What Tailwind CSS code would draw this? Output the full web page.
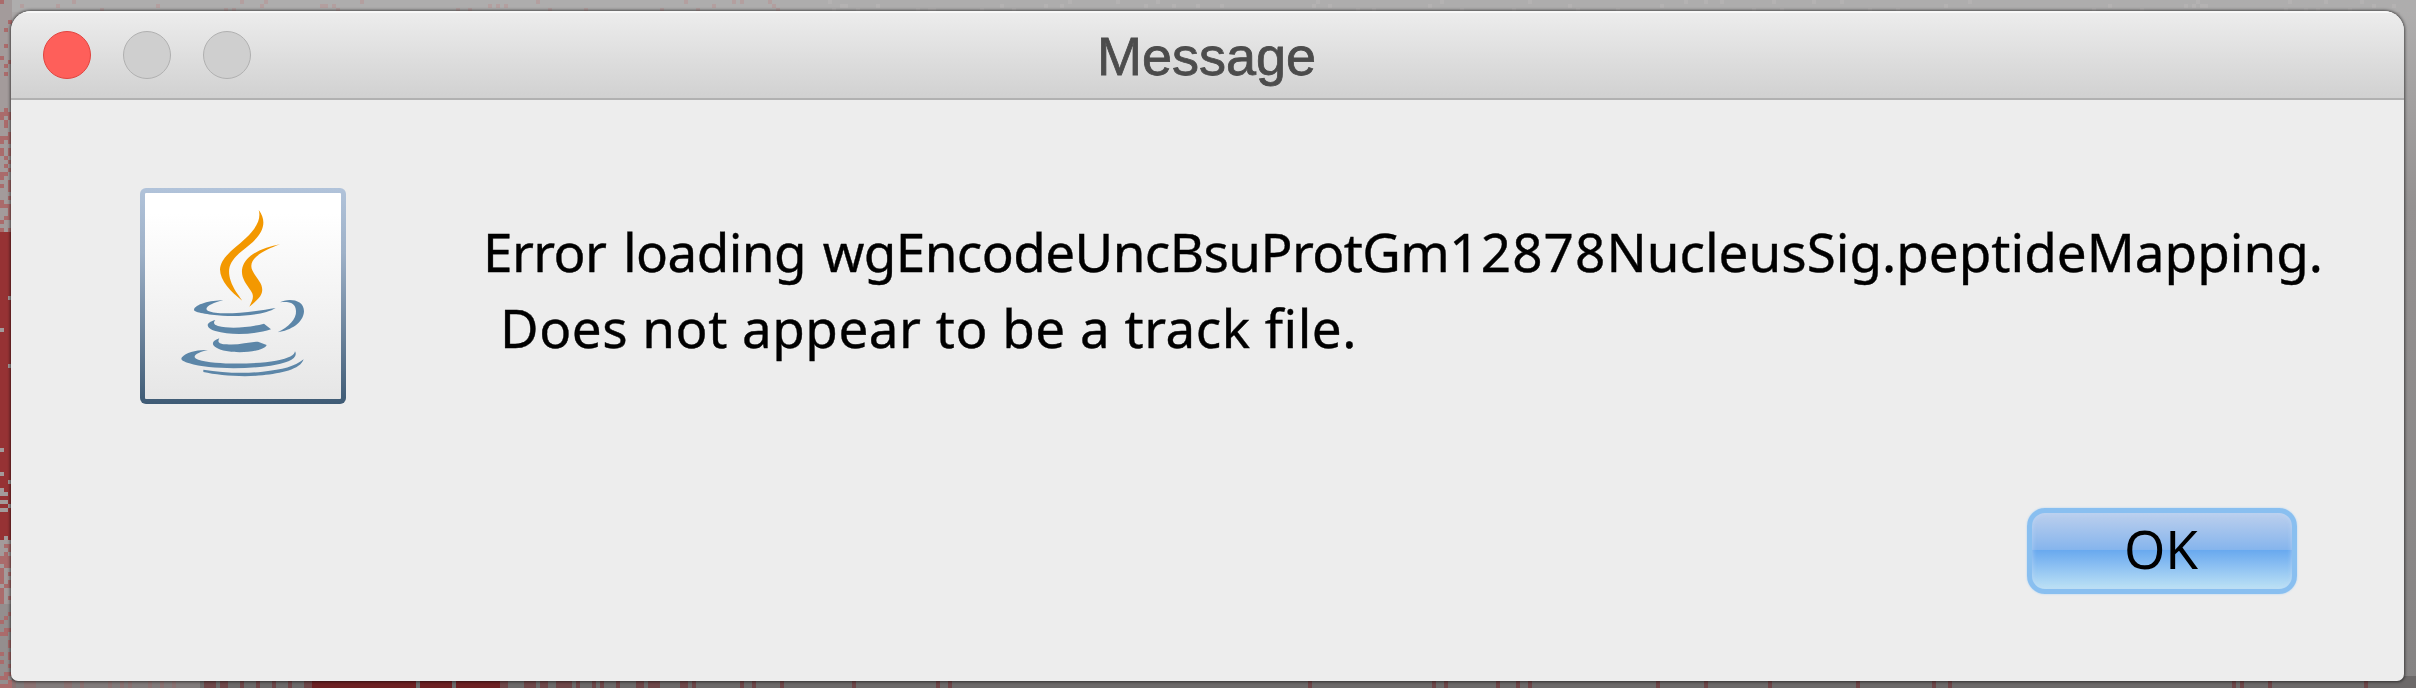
<!DOCTYPE html>
<html lang="en">
<head>
<meta charset="utf-8">
<title>Message</title>
<script src="https://cdn.jsdelivr.net/npm/@tailwindcss/browser@4"></script>
</head>
<body class="w-[2416px] h-[688px] overflow-hidden bg-[#aaa7a7] relative">
<canvas id="backdrop" width="2416" height="688" class="absolute inset-0"></canvas>
<main class="relative w-full h-full pt-[11px] pl-[11px]">
  <section class="w-[2393px] h-[669.5px] rounded-t-[20px] rounded-b-[7px] bg-[#ededed] shadow-[0_0_3px_0.5px_rgba(0,0,0,0.55)] overflow-hidden flex flex-col">
    <header class="h-[89px] shrink-0 grid grid-cols-[1fr_auto_1fr] items-center border-b-2 border-[#b1b1b1] bg-linear-to-b from-[#ededed] to-[#d1d1d1] shadow-[inset_0_2px_0_#f8f8f8]">
      <div class="flex gap-8 pl-8">
        <span class="size-12 rounded-full bg-[#fe5f5a] border border-[#e0443f]"></span>
        <span class="size-12 rounded-full bg-[#cfcfcf] border-[1.5px] border-[#b0b0b0]"></span>
        <span class="size-12 rounded-full bg-[#cfcfcf] border-[1.5px] border-[#b0b0b0]"></span>
      </div>
      <h1 class="font-['Liberation_Sans'] text-[54px] leading-none text-[#4c4c4c] pt-[2px] -ml-[2px] [-webkit-text-stroke:0.8px_#4c4c4c]">Message</h1>
      <div></div>
    </header>
    <div class="flex pt-[88px] pl-[129px]">
      <svg class="w-[206px] h-[216px] shrink-0" viewBox="0 0 206 216">
        <defs>
          <linearGradient id="edge" x1="0" y1="0" x2="0" y2="1"><stop offset="0" stop-color="#b1c3da"/><stop offset=".3" stop-color="#9eb1c8"/><stop offset="1" stop-color="#3f5b75"/></linearGradient>
          <linearGradient id="face" x1="0" y1="0" x2="0" y2="1"><stop offset="0.1" stop-color="#fff"/><stop offset="1" stop-color="#e6e6e6"/></linearGradient>
        </defs>
        <rect width="206" height="216" rx="6" fill="url(#edge)"/>
        <rect x="5" y="5" width="196" height="206" rx="1" fill="url(#face)"/>
        <g transform="translate(-20 -18) scale(.33333)">
          <g fill="#f39800">
            <path d="M416 120C443 155 430 191 388 225C345 259 315 282 332 332C340 356 354 373 367 392C333 367 300 332 300 298C302 262 342 238 377 205C410 174 424 145 416 120Z"/>
            <path d="M480 223C425 244 382 267 397 301C408 325 431 340 426 366C422 385 402 397 388 410C399 389 403 378 393 363C378 341 364 325 366 300C371 254 430 233 480 223Z"/>
          </g>
          <g fill="#5c86a8">
            <path d="M310 391C275 399 247 414 265 423C298 438 399 426 467 414C437 433 368 441 308 437C264 434 222 427 222 420C224 403 271 391 310 391Z"/>
            <path d="M480 397C500 385 552 385 552 424C551 458 512 482 473 487C505 471 530 448 528 423C527 400 510 394 480 397Z"/>
            <path d="M286 450C278 460 283 465 294 468C332 478 391 472 432 461L453 478C404 494 333 497 286 483C263 476 249 460 286 450Z"/>
            <path d="M298 505C289 520 304 522 320 523C356 526 386 516 414 515L440 525C433 543 365 552 319 543C279 536 263 516 298 505Z"/>
            <path d="M264 540C235 545 208 561 235 569C287 585 405 583 468 572C508 565 524 555 525 544C537 565 500 580 452 587C371 599 262 597 208 580C188 574 180 569 186 562C198 547 232 538 264 540Z"/>
            <path d="M250 599C307 608 369 612 428 605C489 599 523 590 551 568C541 599 482 610 428 616C365 622 294 616 250 606Z"/>
          </g>
        </g>
      </svg>
      <div class="pl-[137px] pt-[26px] whitespace-pre text-black font-['Noto_Sans'] text-[53px] leading-[76px] [-webkit-text-stroke:0.4px_#000]"><p class="w-max tracking-[-0.58px] [word-spacing:3.5px]">Error loading wgEncodeUncBsuProtGm<span class="tracking-[1.1px]">12878</span><span class="tracking-[0.01px]">NucleusSig.peptideMapping.</span></p><p class="w-max pl-[17px] tracking-[0.5px]">Does not appear to be a track file.</p></div>
    </div>
    <div class="mt-auto mb-[87px] pr-[107px] flex justify-end">
      <button class="w-[270px] h-[86px] rounded-[18px] border-[5px] border-[#89bff0] bg-[linear-gradient(to_bottom,#bccfed_0%,#86b5ed_48%,#69a9ef_49%,#8cc0f2_70%,#bde2f5_100%)] shadow-[0_0_2px_#a9d2f5,inset_0_0_5px_rgba(190,215,245,0.8)] text-black font-['Noto_Sans'] text-[53px] leading-none"><span class="block -mt-[4px] -ml-[2px]">OK</span></button>
    </div>
  </section>
</main>
<script>
const c=document.getElementById('backdrop').getContext('2d');
let s=7;
const r=()=>(s=(s*16807)%2147483647)/2147483647;
const cell=(x,y,w,h,color)=>{c.fillStyle=color;c.fillRect(x,y,w,h)};
const side=c.createLinearGradient(0,0,0,688);
side.addColorStop(0,'#b0afaf');side.addColorStop(.3,'#949191');side.addColorStop(1,'#858383');
cell(2400,0,16,688,side);
cell(0,0,2416,12,'#aeadad');
cell(12,676,2404,12,'#6c6969');
for(let y=0;y<688;y+=4)for(let x=0;x<12;x+=4){
  const core=y>230&&y<540;
  const d=y>230&&y<440?.98:core?.85:y<110?.2:.45;
  cell(x,y,4,4,r()<d?(core?'#963234':'#aa6b6b'):(y>600?'#948e8e':'#a39b9b'));
}
for(let x=12;x<2400;x+=4){
  if(r()<.15)cell(x,4*Math.floor(r()*3),4,4,x<800?'#b39f9f':'#b4b2b2');
  const d=x>310&&x<500?.92:x>200&&x<720?.35:.04;
  if(x<200)cell(x,680,4,8,r()<.3?'#8b7272':'#817b7b');
  else if(r()<d)cell(x,681,4,7,x>310&&x<500?'#6d2022':'#6e4648');
}
</script>
</body>
</html>
